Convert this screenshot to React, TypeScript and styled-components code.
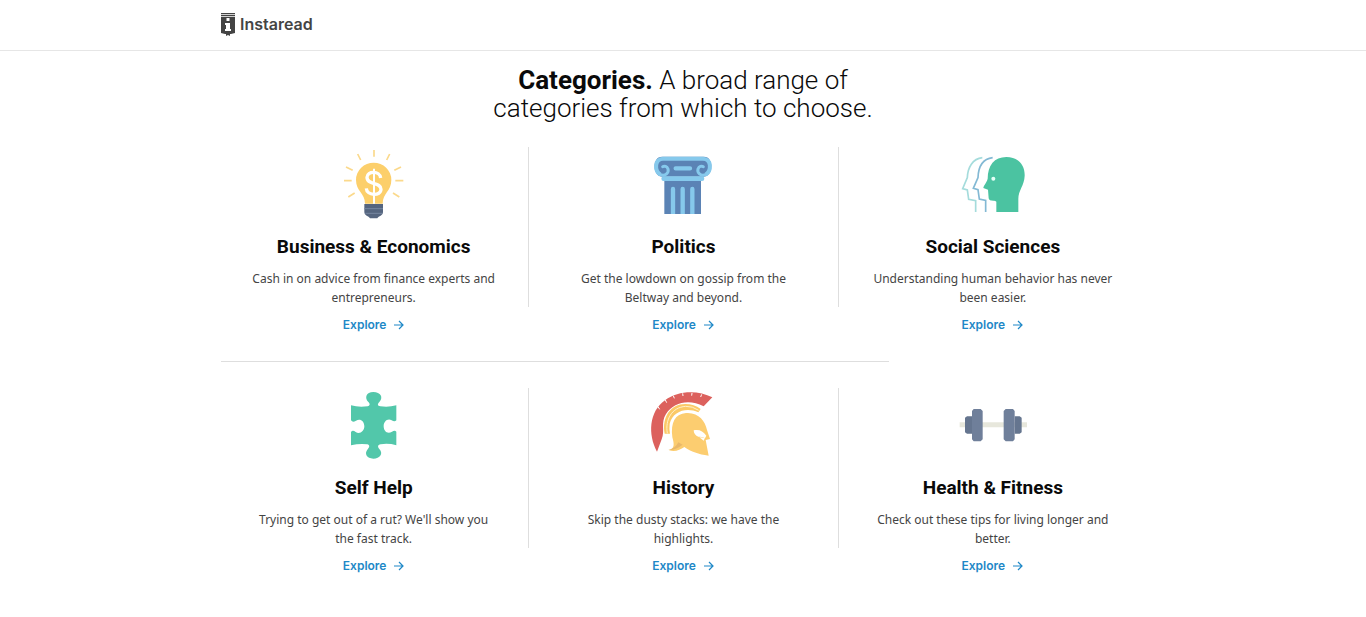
import React from "react";
import styled, { createGlobalStyle } from "styled-components";

const Global = createGlobalStyle`
  *, *::before, *::after { box-sizing: border-box; }
  body { margin: 0; background: #fff; color: #0a0a0a; font-family: "Noto Sans", sans-serif; }
  h1, h2, p, ul { margin: 0; padding: 0; }
`;

const Header = styled.header`
  border-bottom: 1px solid #e6e6e6;
`;

const Container = styled.div`
  max-width: 928px;
  margin: 0 auto;
`;

const Brand = styled.a`
  display: inline-flex;
  align-items: center;
  gap: 5px;
  height: 50px;
  padding: 0 2px 2px;
  color: #444;
  font: 600 16px/24px Inter, sans-serif;
  text-decoration: none;
`;

const Heading = styled.h1`
  max-width: 400px;
  margin: 15px auto 25px;
  text-align: center;
  font-family: Roboto, sans-serif;
  font-size: 26px;
  line-height: 28px;
  font-weight: 300;
  strong { font-weight: 700; }
`;

const Row = styled.ul`
  display: grid;
  grid-template-columns: repeat(3, 1fr);
  list-style: none;
`;

const Rule = styled.hr`
  width: 72%;
  margin: 27px 0 26px 2px;
  border: 0;
  border-top: 1px solid #dedede;
`;

const Card = styled.li`
  display: flex;
  flex-direction: column;
  align-items: center;
  gap: 8px;
  text-align: center;
  &:not(:first-child) > div { border-left: 1px solid #dedede; }
`;

const Body = styled.div`
  display: flex;
  flex-direction: column;
  align-items: center;
  width: 100%;
  padding: 0 28px;
`;

const Title = styled.h2`
  margin: 12px 0 10px;
  font-family: Roboto, sans-serif;
  font-size: 19px;
  line-height: 24px;
  font-weight: 700;
`;

const Description = styled.p`
  max-width: 250px;
  color: #444;
  font-size: 12px;
  line-height: 19px;
`;

const Explore = styled.a`
  display: inline-flex;
  align-items: center;
  gap: 8px;
  color: #1e88c7;
  font: 600 12px/19px Inter, sans-serif;
  text-decoration: none;
`;

const Picture = styled.svg`
  display: block;
  width: 80px;
  height: 76px;
`;

const Bulb = () => (
  <>
    <path d="M120 15v20M71 27l9 18M167 27l-9 18M36 66l20 10M201 66l-20 10M30 107h23M184 107h24M43 156l19-12M196 156l-19-12" stroke="#fbd98b" strokeWidth="5" fill="none" />
    <path d="M93 176c0-32-27-37-27-71a53 52 0 0 1 106 0c0 34-26 39-26 71z" fill="#fccf6b" />
    <path d="M140 99c-2-22-41-22-41-2 0 25 42 13 42 36 0 21-43 20-44-3" stroke="#fff" strokeWidth="10" fill="none" />
    <path d="M120 71v105" stroke="#fff" strokeWidth="6" />
    <path d="M91 177h56v24c0 12-13 11-17 19h-22c-4-8-17-7-17-19z" fill="#55657f" />
    <path d="M91 191h56M94 205h50" stroke="#7686a0" strokeWidth="3" />
  </>
);

const Column = () => (
  <>
    <path d="M64 104h110v103H64z" fill="#5b83b5" />
    <path d="M57 35h126c31 0 28 60-2 60H58c-29 0-33-60-1-60z" fill="#5b83b5" />
    <path d="M52 89c-18-12-18-48 8-48h120c26 0 26 36 8 48" fill="none" stroke="#86c9ec" strokeWidth="12" />
    <path d="M52 89c16 6 26-6 23-17-3-8-11-10-16-7M188 89c-16 6-26-6-23-17 3-8 11-10 16-7" fill="none" stroke="#86c9ec" strokeWidth="9" strokeLinecap="round" />
    <path d="M62 101h115" stroke="#86c9ec" strokeWidth="14" strokeLinecap="round" />
    <path d="M98 70h43M90 132v75M119 132v75M148 132v75" stroke="#86c9ec" strokeWidth="13" strokeLinecap="round" />
    <path d="M64 207h110v8H64z" fill="#fff" />
  </>
);

const Heads = () => (
  <>
    <path d="M88 38C59 41 44 67 43 98L29 131l14 4 4 28 21 4v34" fill="none" stroke="#a5dcdc" strokeWidth="5" />
    <path d="M119 38C88 42 76 67 75 98l-14 32 14 4 4 28 19 4v35" fill="none" stroke="#83b9d4" strokeWidth="5" />
    <path d="M160 36c37 0 56 25 55 56-1 30-19 43-19 70v39h-66v-31c-8-5-20 1-23-10l-2-26-14-5c1-9 10-15 13-28 0-40 20-65 56-65z" fill="#4bc3a1" />
    <circle cx="121" cy="101" r="6" fill="#e5fff7" />
  </>
);

const Puzzle = () => (
  <path d="M51 58q23 7 50 3c8-3 7-8 2-13-12-12-7-30 15-30s31 16 18 30c-6 7-6 11 3 13q24 4 48-3v45c-4 5-9 3-14 0-12-7-24 3-24 18s12 25 25 16c6-4 10-4 13 0v41q-24-7-47-3c-10 2-9 8-4 14 13 14 2 29-18 29s-28-15-17-28c7-8 6-13-1-15q-24-3-49 3v-40c4-5 8-4 14 0 11 8 26-1 26-17s-13-25-25-17c-7 4-11 4-15-1z" fill="#52c7aa" />
);

const Helmet = () => (
  <>
    <path d="M42 197C14 145 18 77 66 43 107 12 166 13 208 34l-26 27C139 38 92 48 69 84c-17 27-2 49-13 76z" fill="#dc615d" />
    <path d="M45 62l5 8M67 42l4 8M91 29l3 8M119 22l1 8M147 21l-1 8M176 25l-3 8" stroke="#fff" strokeWidth="3" />
    <path d="M65 143C56 93 83 54 127 54q26 0 46 15l-7 10c-35-16-76-4-86 34q-2 16 1 30z" fill="#fbc967" />
    <path d="M73 142c-7-41 13-78 55-81q20-1 39 12" fill="none" stroke="#fff2cb" strokeWidth="3" />
    <path d="M78 193c17-5 16-18 10-39-6-46 9-70 41-73 37-3 58 24 63 51l9 27-13 3 9 47c-31-4-52-12-73-26-13 9-28 16-46 10z" fill="#fccd70" />
    <path d="M76 192q21 1 43-16l-13-7q-8 18-30 23z" fill="#e9b86a" />
    <path d="M152 133c16-4 28 2 38 16l-4 8c-8-6-14-4-20-5-8-2-14-10-14-19z" fill="#fff" />
    <path d="M169 154l17 1-4 9z" fill="#fff" />
  </>
);

const Dumbbell = () => (
  <>
    <path d="M20 109h202v15H20z" fill="#e7e7dc" />
    <path d="M57 91v52H42l-6-4V95l6-4zM185 91v52h15l6-4V95l-6-4z" fill="#65758f" />
    <path d="M62 69h21l6 6v85l-6 6H62l-5-6V75zM158 69h22l5 6v85l-5 6h-22l-6-6V75z" fill="#6f7f9a" />
  </>
);

type Category = { title: string; text: string; Art: React.FC };

const rows: Category[][] = [
  [
    { title: "Business & Economics", text: "Cash in on advice from finance experts and entrepreneurs.", Art: Bulb },
    { title: "Politics", text: "Get the lowdown on gossip from the Beltway and beyond.", Art: Column },
    { title: "Social Sciences", text: "Understanding human behavior has never been easier.", Art: Heads },
  ],
  [
    { title: "Self Help", text: "Trying to get out of a rut? We'll show you the fast track.", Art: Puzzle },
    { title: "History", text: "Skip the dusty stacks: we have the highlights.", Art: Helmet },
    { title: "Health & Fitness", text: "Check out these tips for living longer and better.", Art: Dumbbell },
  ],
];

const CategoryCard = ({ title, text, Art }: Category) => (
  <Card>
    <Body>
      <Picture viewBox="0 6 240 228" aria-hidden="true"><Art /></Picture>
      <Title>{title}</Title>
      <Description>{text}</Description>
    </Body>
    <Explore href="#">
      Explore
      <svg width="10" height="10" viewBox="0 0 10 10" fill="none" stroke="currentColor" strokeWidth="1.2" aria-hidden="true">
        <path d="M0 5h9M5 1l4 4-4 4" />
      </svg>
    </Explore>
  </Card>
);

export default function App() {
  return (
    <>
      <Global />
      <Header>
        <Container>
          <Brand href="#">
            <svg width="14" height="24" viewBox="0 0 14 24" aria-hidden="true">
              <path d="M0 1h14v1.200H0zM0 3h14v1.200H0zM0 5h14v16l-4 1H9v2l-2-1-2 1v-2H4l-4-1z" fill="#444" />
              <path d="M5.500 6h3v3h-3zM4 11h5v6h1v2H4v-2h1v-4H4z" fill="#fff" />
            </svg>
            Instaread
          </Brand>
        </Container>
      </Header>
      <main>
        <Container>
          <Heading><strong>Categories.</strong> A broad range of categories from which to choose.</Heading>
          {rows.map((row, i) => (
            <React.Fragment key={i}>
              {i > 0 && <Rule />}
              <Row>
                {row.map((c) => <CategoryCard key={c.title} {...c} />)}
              </Row>
            </React.Fragment>
          ))}
        </Container>
      </main>
    </>
  );
}
